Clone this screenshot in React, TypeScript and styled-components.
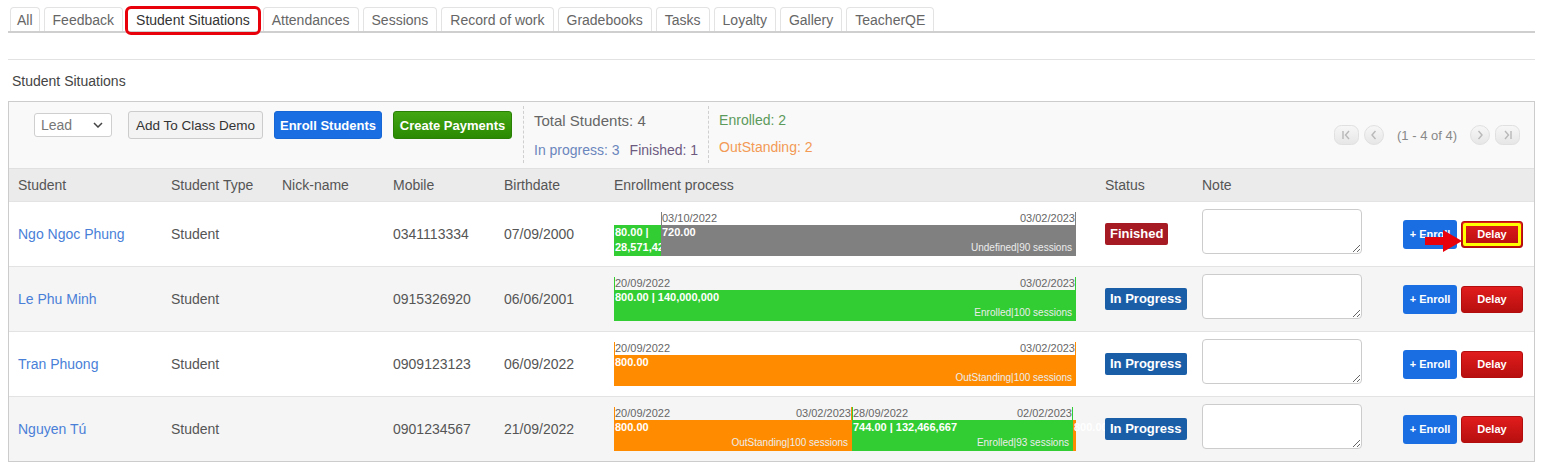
import React from 'react';
import styled, { createGlobalStyle, css } from 'styled-components';

const GlobalStyle = createGlobalStyle`
  html, body { margin: 0; padding: 0; background: #fff; }
  body {
    font-family: "Liberation Sans", Arial, Helvetica, sans-serif;
    color: #555;
    font-size: 14px;
  }
  * { box-sizing: border-box; }
`;

const Page = styled.div`
  width: 1541px;
  padding: 0 6px 0 8px;
`;

const TabBar = styled.div`
  display: flex;
  gap: 4px;
  height: 33px;
  padding: 7px 0 0 2px;
  border-bottom: 2px solid #cfcfcf;
`;

const Tab = styled.div<{ $active?: boolean }>`
  position: relative;
  height: 24px;
  padding: 0 8px;
  display: flex;
  align-items: center;
  border: 1px solid #e3e3e3;
  border-bottom: none;
  border-radius: 4px 4px 0 0;
  background: #fff;
  font-size: 14px;
  white-space: nowrap;
  color: ${(p) => (p.$active ? '#333' : '#666')};
  &:first-child { padding: 0 6px; }
  ${(p) =>
    p.$active &&
    css`
      &::after {
        content: '';
        position: absolute;
        top: -2px;
        bottom: -4px;
        left: -3px;
        right: -3px;
        border: 3px solid #e8000b;
        border-radius: 6px;
      }
    `}
`;

const Divider = styled.div`
  margin-top: 26px;
  height: 1px;
  background: #e2e2e2;
`;

const Title = styled.div`
  margin-top: 13px;
  padding-left: 4px;
  font-size: 14px;
  line-height: 16px;
  color: #444;
`;

const Panel = styled.div`
  margin-top: 12px;
  border: 1px solid #cccccc;
`;

const Toolbar = styled.div`
  display: flex;
  align-items: flex-start;
  height: 66px;
  padding: 0 14px 0 25px;
  background: #f9f9f9;
`;

const SelectBox = styled.div`
  margin-top: 11px;
  width: 78px;
  height: 24px;
  border: 1px solid #cfcfcf;
  border-radius: 3px;
  background: #fff;
  display: flex;
  align-items: center;
  justify-content: space-between;
  padding: 0 8px 0 6px;
  font-size: 14px;
  color: #777;
`;

const Btn = styled.div<{ $variant: 'default' | 'blue' | 'green'; $w: number }>`
  margin-top: 9px;
  width: ${(p) => p.$w}px;
  height: 28px;
  display: flex;
  align-items: center;
  justify-content: center;
  border-radius: 3px;
  white-space: nowrap;
  ${(p) =>
    p.$variant === 'default'
      ? css`
          margin-left: 16px;
          background: #f3f3f3;
          border: 1px solid #cccccc;
          color: #333;
          font-size: 13.5px;
        `
      : p.$variant === 'blue'
      ? css`
          margin-left: 11px;
          background: #1a6ee2;
          border: 1px solid #1766d6;
          color: #fff;
          font-weight: bold;
          font-size: 13px;
        `
      : css`
          margin-left: 11px;
          background: linear-gradient(#42a612, #2a8a02);
          border: 1px solid #2a8004;
          color: #fff;
          font-weight: bold;
          font-size: 13px;
        `}
`;

const DashSep = styled.div<{ $ml: number }>`
  margin: 4px 0 0 ${(p) => p.$ml}px;
  height: 57px;
  border-left: 1px dashed #cfcfcf;
`;

const StatBlock = styled.div<{ $top: number }>`
  padding: ${(p) => p.$top}px 10px 0 10px;
  display: flex;
  flex-direction: column;
  gap: 11px;
`;

const StatLine = styled.div`
  display: flex;
  gap: 10px;
  font-size: 14px;
  line-height: 16px;
`;

const BigStat = styled.div`
  font-size: 15px;
  line-height: 20px;
  color: #666;
`;

const Stat = styled.span<{ $color: string }>`
  color: ${(p) => p.$color};
`;

const Pager = styled.div`
  margin: 23px 0 0 auto;
  display: flex;
  align-items: center;
  gap: 5px;
`;

const PagerText = styled.span`
  margin: 0 8px;
  font-size: 13px;
  color: #888;
`;

const cols = '153px 111px 111px 111px 110px 491px 97px 1fr 155px';

const HeaderRow = styled.div`
  display: grid;
  grid-template-columns: ${cols};
  align-items: center;
  height: 33px;
  background: #ebebec;
  border-top: 1px solid #e0e0e0;
  font-size: 14px;
  color: #555;
`;

const Row = styled.div<{ $alt?: boolean }>`
  display: grid;
  grid-template-columns: ${cols};
  align-items: center;
  height: 65px;
  border-top: 1px solid #e3e3e3;
  background: ${(p) => (p.$alt ? '#f5f5f5' : '#fff')};
  font-size: 14px;
  color: #555;
`;

const Cell = styled.div`
  padding: 0 9px;
  white-space: nowrap;
`;

const NameLink = styled(Cell)`
  color: #4a7fd8;
`;

const Bar = styled.div`
  display: flex;
  width: 462px;
`;

const Segment = styled.div`
  display: flex;
  flex-direction: column;
  flex: 0 0 auto;
`;

const DateRow = styled.div<{ $color?: string }>`
  height: 13px;
  display: flex;
  justify-content: space-between;
  font-size: 11px;
  line-height: 13px;
  color: #666;
  white-space: nowrap;
  ${(p) =>
    p.$color &&
    css`
      border-left: 1px solid ${p.$color};
      border-right: 1px solid ${p.$color};
    `}
`;

const Block = styled.div<{ $color: string }>`
  height: 31px;
  padding: 0 1px;
  background: ${(p) => p.$color};
  display: flex;
  flex-direction: column;
  color: #fff;
`;

const SegValue = styled.div`
  font-size: 11px;
  font-weight: bold;
  line-height: 15px;
  white-space: normal;
`;

const SegLabel = styled.div`
  margin-top: auto;
  padding: 0 3px 2px 0;
  text-align: right;
  font-size: 10px;
  line-height: 12px;
  color: #ececec;
  white-space: nowrap;
`;

const Badge = styled.span<{ $kind: 'finished' | 'progress' }>`
  display: inline-block;
  padding: 2px 5px;
  line-height: 18px;
  font-size: 13px;
  font-weight: bold;
  color: #fff;
  border-radius: 2px;
  background: ${(p) => (p.$kind === 'finished' ? '#a61b23' : '#1b5ea8')};
`;

const NoteArea = styled.textarea`
  display: block;
  width: 160px;
  height: 45px;
  margin-bottom: 6px;
  border: 1px solid #cccccc;
  border-radius: 4px;
  background: #fff;
  font-family: inherit;
`;

const Actions = styled.div`
  position: relative;
  display: flex;
  justify-content: flex-end;
  align-items: center;
  gap: 4px;
  padding-right: 11px;
`;

const EnrollBtn = styled.div`
  width: 54px;
  height: 29px;
  display: flex;
  align-items: center;
  justify-content: center;
  background: #1a6ee2;
  border-radius: 3px;
  color: #fff;
  font-size: 11px;
  font-weight: bold;
  white-space: nowrap;
`;

const DelayBtn = styled.div<{ $highlight?: boolean }>`
  position: relative;
  width: 62px;
  height: 27px;
  display: flex;
  align-items: center;
  justify-content: center;
  background: linear-gradient(#e11c1c, #b70f0f);
  border: 1px solid #b30d0d;
  border-radius: 3px;
  color: #fff;
  font-size: 11px;
  font-weight: bold;
  ${(p) =>
    p.$highlight &&
    css`
      &::after {
        content: '';
        position: absolute;
        inset: 1px;
        border: 3px solid #ffff00;
        border-radius: 2px;
      }
    `}
`;

const Arrow = styled.svg`
  position: absolute;
  left: 46px;
  top: 10px;
`;

type Seg = { w: number; color: string; start?: string; end?: string; value: string; label?: string };
type StudentRow = {
  name: string;
  mobile: string;
  birth: string;
  segs: Seg[];
  status: 'finished' | 'progress';
  highlight?: boolean;
};

const GREEN = '#32cd32';
const ORANGE = '#ff8c00';
const GRAY = '#808080';

const rows: StudentRow[] = [
  {
    name: 'Ngo Ngoc Phung',
    mobile: '0341113334',
    birth: '07/09/2000',
    segs: [
      { w: 47, color: GREEN, value: '80.00 | 28,571,428' },
      { w: 415, color: GRAY, start: '03/10/2022', end: '03/02/2023', value: '720.00', label: 'Undefined|90 sessions' },
    ],
    status: 'finished',
    highlight: true,
  },
  {
    name: 'Le Phu Minh',
    mobile: '0915326920',
    birth: '06/06/2001',
    segs: [
      { w: 462, color: GREEN, start: '20/09/2022', end: '03/02/2023', value: '800.00 | 140,000,000', label: 'Enrolled|100 sessions' },
    ],
    status: 'progress',
  },
  {
    name: 'Tran Phuong',
    mobile: '0909123123',
    birth: '06/09/2022',
    segs: [
      { w: 462, color: ORANGE, start: '20/09/2022', end: '03/02/2023', value: '800.00', label: 'OutStanding|100 sessions' },
    ],
    status: 'progress',
  },
  {
    name: 'Nguyen Tú',
    mobile: '0901234567',
    birth: '21/09/2022',
    segs: [
      { w: 238, color: ORANGE, start: '20/09/2022', end: '03/02/2023', value: '800.00', label: 'OutStanding|100 sessions' },
      { w: 221, color: GREEN, start: '28/09/2022', end: '02/02/2023', value: '744.00 | 132,466,667', label: 'Enrolled|93 sessions' },
      { w: 3, color: ORANGE, value: '800.00' },
    ],
    status: 'progress',
  },
];

const tabs = ['All', 'Feedback', 'Student Situations', 'Attendances', 'Sessions', 'Record of work', 'Gradebooks', 'Tasks', 'Loyalty', 'Gallery', 'TeacherQE'];

const PagerIcon: React.FC<{ kind: 'first' | 'prev' | 'next' | 'last' }> = ({ kind }) => {
  const wide = kind === 'first' || kind === 'last';
  const w = wide ? 25 : 20;
  return (
    <svg width={w} height={20} viewBox={`0 0 ${w} 20`}>
      <defs>
        <linearGradient id={`pg-${kind}`} x1="0" y1="0" x2="0" y2="1">
          <stop offset="0" stopColor="#f7f7f7" />
          <stop offset="1" stopColor="#e6e6e6" />
        </linearGradient>
      </defs>
      <rect x={0.5} y={0.5} width={w - 1} height={19} rx={wide ? 7 : 9.5} fill={`url(#pg-${kind})`} stroke="#e0e0e0" />
      {kind === 'first' && (
        <g stroke="#b8b8b8" strokeWidth={1.4} fill="none">
          <line x1={9} y1={6} x2={9} y2={14} />
          <polyline points="15,6 11.5,10 15,14" />
        </g>
      )}
      {kind === 'prev' && <polyline points="11.5,6 8,10 11.5,14" stroke="#b8b8b8" strokeWidth={1.4} fill="none" />}
      {kind === 'next' && <polyline points="8.5,6 12,10 8.5,14" stroke="#b8b8b8" strokeWidth={1.4} fill="none" />}
      {kind === 'last' && (
        <g stroke="#b8b8b8" strokeWidth={1.4} fill="none">
          <polyline points="10,6 13.5,10 10,14" />
          <line x1={16} y1={6} x2={16} y2={14} />
        </g>
      )}
    </svg>
  );
};

export default function App() {
  return (
    <>
      <GlobalStyle />
      <Page>
        <TabBar>
          {tabs.map((t) => (
            <Tab key={t} $active={t === 'Student Situations'}>
              {t}
            </Tab>
          ))}
        </TabBar>
        <Divider />
        <Title>Student Situations</Title>
        <Panel>
          <Toolbar>
            <SelectBox>
              <span>Lead</span>
              <svg width="10" height="6" viewBox="0 0 10 6">
                <polyline points="1,1 5,5 9,1" stroke="#444" strokeWidth="1.5" fill="none" />
              </svg>
            </SelectBox>
            <Btn $variant="default" $w={135}>Add To Class Demo</Btn>
            <Btn $variant="blue" $w={108}>Enroll Students</Btn>
            <Btn $variant="green" $w={119}>Create Payments</Btn>
            <DashSep $ml={11} />
            <StatBlock $top={9}>
              <BigStat>Total Students: 4</BigStat>
              <StatLine>
                <Stat $color="#6b86bd">In progress: 3</Stat>
                <Stat $color="#6d5a80">Finished: 1</Stat>
              </StatLine>
            </StatBlock>
            <DashSep $ml={0} />
            <StatBlock $top={10}>
              <StatLine>
                <Stat $color="#5c9a5c">Enrolled: 2</Stat>
              </StatLine>
              <StatLine>
                <Stat $color="#f39a55">OutStanding: 2</Stat>
              </StatLine>
            </StatBlock>
            <Pager>
              <PagerIcon kind="first" />
              <PagerIcon kind="prev" />
              <PagerText>(1 - 4 of 4)</PagerText>
              <PagerIcon kind="next" />
              <PagerIcon kind="last" />
            </Pager>
          </Toolbar>
          <HeaderRow>
            <Cell>Student</Cell>
            <Cell>Student Type</Cell>
            <Cell>Nick-name</Cell>
            <Cell>Mobile</Cell>
            <Cell>Birthdate</Cell>
            <Cell>Enrollment process</Cell>
            <Cell>Status</Cell>
            <Cell>Note</Cell>
            <Cell />
          </HeaderRow>
          {rows.map((r, i) => (
            <Row key={r.name} $alt={i % 2 === 1}>
              <NameLink>{r.name}</NameLink>
              <Cell>Student</Cell>
              <Cell />
              <Cell>{r.mobile}</Cell>
              <Cell>{r.birth}</Cell>
              <Cell>
                <Bar>
                  {r.segs.map((s, j) => (
                    <Segment key={j} style={{ width: s.w }}>
                      <DateRow $color={s.start ? s.color : undefined}>
                        <span>{s.start}</span>
                        <span>{s.end}</span>
                      </DateRow>
                      <Block $color={s.color}>
                        <SegValue>{s.value}</SegValue>
                        {s.label && <SegLabel>{s.label}</SegLabel>}
                      </Block>
                    </Segment>
                  ))}
                </Bar>
              </Cell>
              <Cell>
                <Badge $kind={r.status}>{r.status === 'finished' ? 'Finished' : 'In Progress'}</Badge>
              </Cell>
              <Cell>
                <NoteArea />
              </Cell>
              <Actions>
                <EnrollBtn>+ Enroll</EnrollBtn>
                <DelayBtn $highlight={r.highlight}>Delay</DelayBtn>
                {r.highlight && (
                  <Arrow width="37" height="22" viewBox="0 0 37 22">
                    <polygon points="0,7 18,7 18,0 37,11 18,22 18,15 0,15" fill="#e8000b" />
                  </Arrow>
                )}
              </Actions>
            </Row>
          ))}
        </Panel>
      </Page>
    </>
  );
}
